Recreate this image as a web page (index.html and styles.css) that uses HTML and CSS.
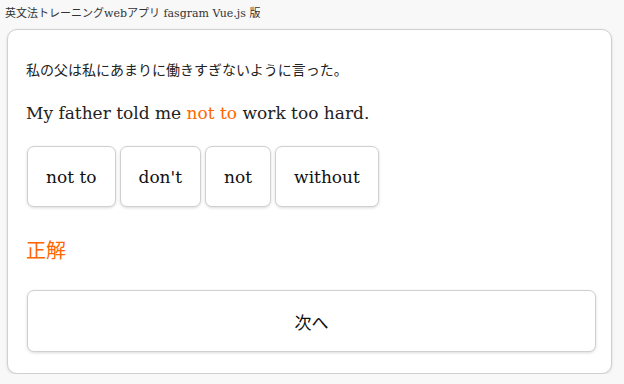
FILE: index.html
```html
<!DOCTYPE html>
<html lang="ja">
<head>
  <meta charset="UTF-8">
  <title>英文法トレーニングwebアプリ fasgram Vue.js 版</title>
  <link rel="stylesheet" href="styles.css">
</head>
<body>
  <div class="app-title">英文法トレーニングwebアプリ fasgram Vue.js 版</div>

  <div class="quiz-card">
    <p class="question-ja">私の父は私にあまりに働きすぎないように言った。</p>
    <p class="question-en">My father told me <span class="answer">not to</span> work too hard.</p>

    <div class="choices">
      <button type="button" class="choice">not to</button>
      <button type="button" class="choice">don't</button>
      <button type="button" class="choice">not</button>
      <button type="button" class="choice">without</button>
    </div>

    <div class="result">正解</div>

    <button type="button" class="next-button">次へ</button>
  </div>
</body>
</html>
```

FILE: styles.css
```css
body {
  margin: 0;
  padding: 0;
  background-color: #f8f8f8;
  font-family: "DejaVu Serif", "Noto Sans CJK JP", serif;
  color: #222;
}

.app-title {
  font-size: 11px;
  padding: 4px 5px 0;
  height: 29px;
  box-sizing: border-box;
  color: #333;
}

.quiz-card {
  margin: 0 12px 0 7px;
  padding: 28px 15px 21px 18px;
  background-color: #fff;
  border: 1px solid #d0d0d0;
  border-radius: 10px;
  box-shadow: 0 1px 3px rgba(0, 0, 0, 0.12);
}

.question-ja {
  margin: 0;
  font-family: "Noto Sans CJK JP", sans-serif;
  font-size: 14px;
  line-height: 22px;
}

.question-en {
  margin: 20px 0 0;
  font-size: 17px;
  line-height: 26px;
}

.answer {
  color: #ff6600;
}

.choices {
  display: flex;
  gap: 4px;
  margin-top: 20px;
  padding-left: 1px;
}

.choice {
  font-family: "DejaVu Serif", serif;
  font-size: 17px;
  color: #111;
  background-color: #fff;
  border: 1px solid #d0d0d0;
  border-radius: 7px;
  box-shadow: 0 1px 3px rgba(0, 0, 0, 0.15);
  height: 61px;
  min-width: 66px;
  padding: 0 18px;
  cursor: pointer;
}

.result {
  margin-top: 29px;
  font-family: "Noto Sans CJK JP", sans-serif;
  font-size: 20px;
  line-height: 28px;
  color: #ff6600;
}

.next-button {
  display: block;
  width: calc(100% - 1px);
  margin: 26px 0 0 1px;
  height: 62px;
  font-family: "Noto Sans CJK JP", sans-serif;
  font-size: 17px;
  color: #111;
  background-color: #fff;
  border: 1px solid #d0d0d0;
  border-radius: 7px;
  box-shadow: 0 1px 3px rgba(0, 0, 0, 0.15);
  cursor: pointer;
}
```
